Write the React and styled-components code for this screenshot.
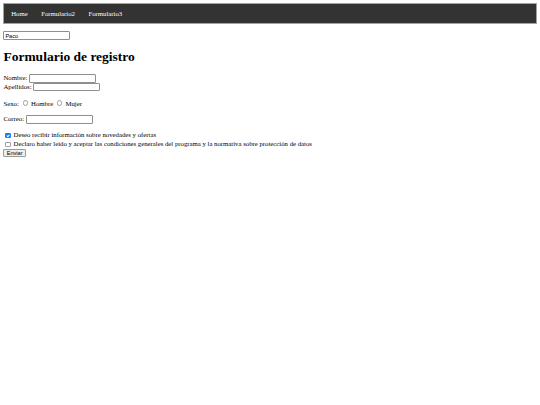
import React, { useState } from 'react';
import styled, { createGlobalStyle } from 'styled-components';

// everything is drawn at 0.42 of a 1280px page, so sizes are small on purpose
const GlobalStyle = createGlobalStyle`
  body {
    margin: 3.4px;
    font-family: "Liberation Serif", "Times New Roman", serif;
    font-size: 6.75px;
    line-height: 1.15;
    color: #000;
    background: #fff;
  }
`;

const NavList = styled.ul`
  list-style-type: none;
  margin: 0;
  padding: 0;
  display: flex;
  border: 1px solid #a2a2a2;
  background-color: #333;
`;

const NavLink = styled.a`
  display: block;
  color: #fff;
  padding: 5.5px 6.75px;
  line-height: 7.6px;
  text-decoration: none;
`;

const Title = styled.h1`
  font-size: 13.5px;
  font-weight: bold;
  margin: 9px 0;
`;

const Para = styled.p`
  margin: 7.5px 0;
`;

const TextInput = styled.input.attrs({ type: 'text' })`
  box-sizing: border-box;
  width: 67px;
  height: 8.8px;
  padding: 0 1px;
  border: 1px solid #8f8f8f;
  border-radius: 1px;
  font-family: "Liberation Sans", Arial, sans-serif;
  font-size: 5.6px;
  color: #000;
  vertical-align: baseline;
`;

const Radio = styled.input.attrs({ type: 'radio' })`
  appearance: none;
  box-sizing: border-box;
  width: 5.5px;
  height: 5.5px;
  margin: 1.3px 1.3px 0 2.1px;
  border: 1px solid #a0a0a0;
  border-radius: 50%;
  background: #fff;
  vertical-align: baseline;
`;

const Check = styled.input.attrs({ type: 'checkbox' })`
  appearance: none;
  position: relative;
  box-sizing: border-box;
  width: 5.5px;
  height: 5.5px;
  margin: 1.5px 1.3px 1.5px 1.7px;
  border: 1px solid #a0a0a0;
  border-radius: 1px;
  background: #fff;
  vertical-align: middle;

  &:checked {
    background: #1a7cf5;
    border-color: #1a7cf5;
  }

  &:checked::after {
    content: '';
    position: absolute;
    left: 0.9px;
    top: -0.2px;
    width: 1.1px;
    height: 2.3px;
    border: solid #fff;
    border-width: 0 0.9px 0.9px 0;
    transform: rotate(45deg);
  }
`;

const Button = styled.button`
  box-sizing: border-box;
  height: 8.4px;
  margin: 0;
  padding: 0 2.3px;
  border: 1px solid #9a9a9a;
  border-radius: 1px;
  background: #efefef;
  font-family: "Liberation Sans", Arial, sans-serif;
  font-size: 5.6px;
  line-height: 6px;
  color: #000;
`;

const links = ['Home', 'Formulario2', 'Formulario3'];

export default function App() {
  const [name, setName] = useState('Paco');
  const [news, setNews] = useState(true);
  const [terms, setTerms] = useState(false);

  return (
    <>
      <GlobalStyle />
      <NavList>
        {links.map((l) => (
          <li key={l}>
            <NavLink href='#'>{l}</NavLink>
          </li>
        ))}
      </NavList>
      <Para>
        <TextInput value={name} onChange={(e) => setName(e.target.value)} />
      </Para>
      <Title>Formulario de registro</Title>
      <form onSubmit={(e) => e.preventDefault()}>
        <Para>
          Nombre: <TextInput name='nombre' />
          <br />
          Apellidos: <TextInput name='apellidos' />
        </Para>
        <Para>
          Sexo: <Radio name='sexo' value='h' /> Hombre{' '}
          <Radio name='sexo' value='m' /> Mujer
        </Para>
        <Para>
          Correo: <TextInput name='correo' />
        </Para>
        <Para>
          <Check checked={news} onChange={(e) => setNews(e.target.checked)} />{' '}
          Deseo recibir información sobre novedades y ofertas
          <br />
          <Check checked={terms} onChange={(e) => setTerms(e.target.checked)} />{' '}
          Declaro haber leído y aceptar las condiciones generales del programa y
          la normativa sobre protección de datos
          <br />
          <Button type='submit'>Enviar</Button>
        </Para>
      </form>
    </>
  );
}
